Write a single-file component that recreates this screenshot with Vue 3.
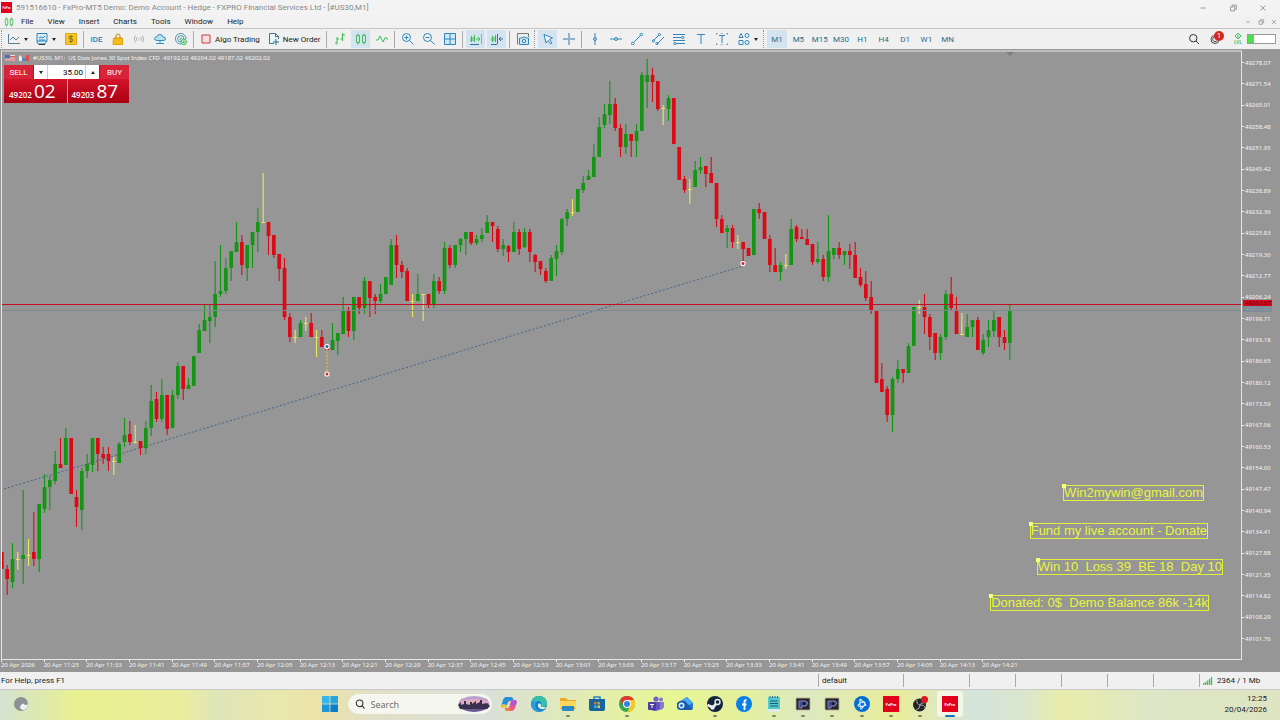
<template>
  <div class="terminal">
    <header class="titlebar">
      <span class="fx-logo">FxPro</span>
      <span class="title">591516610 - FxPro-MT5 Demo: Demo Account - Hedge - FXPRO Financial Services Ltd - [#US30,M1]</span>
      <div class="win-buttons">
        <button v-for="b in windowButtons" :key="b" type="button" :aria-label="b">
          <svg viewBox="0 0 12 12"><path v-for="(p, i) in icons[b]" :key="i" :d="p[0]" :stroke="p[1]" :fill="p[2] || 'none'" /></svg>
        </button>
      </div>
    </header>

    <nav class="menubar">
      <svg class="menu-logo" viewBox="0 0 12 12"><path v-for="(p, i) in icons.candles" :key="i" :d="p[0]" :stroke="p[1]" fill="none" /></svg>
      <button v-for="m in menus" :key="m" type="button" class="menu">{{ m }}</button>
      <div class="win-buttons small">
        <button v-for="b in windowButtons" :key="b" type="button" :aria-label="b + ' chart'">
          <svg viewBox="0 0 12 12"><path v-for="(p, i) in icons[b]" :key="i" :d="p[0]" :stroke="p[1]" fill="none" /></svg>
        </button>
      </div>
    </nav>

    <div class="toolbar">
      <span class="handle"></span>
      <template v-for="(t, n) in tools" :key="n">
        <span v-if="t === '|'" class="sep"></span>
        <span v-else-if="t === ':'" class="handle"></span>
        <button v-else type="button" class="tool" :class="{ active: t.active, wide: t.arrow, labelled: t.label }" :aria-label="t.label || t.icon">
          <b v-if="t.icon === 'ide'" class="ide">IDE</b>
          <svg v-else viewBox="0 0 12 12"><path v-for="(p, i) in icons[t.icon]" :key="i" :d="p[0]" :stroke="p[1]" :fill="p[2] || 'none'" /></svg>
          <span v-if="t.label">{{ t.label }}</span>
          <i v-if="t.arrow" class="arrow"></i>
        </button>
      </template>
      <div class="draw-tools">
        <button v-for="d in drawTools" :key="d" type="button" class="tool" :aria-label="d">
          <svg viewBox="0 0 12 12"><path v-for="(p, i) in icons[d]" :key="i" :d="p[0]" :stroke="p[1]" :fill="p[2] || 'none'" /></svg>
        </button>
      </div>
      <button type="button" class="tool wide" aria-label="shapes">
        <svg viewBox="0 0 12 12"><path v-for="(p, i) in icons.shapes" :key="i" :d="p[0]" :stroke="p[1]" fill="none" /></svg>
        <i class="arrow"></i>
      </button>
      <span class="handle"></span>
      <div class="frames">
        <button v-for="f in timeframes" :key="f" type="button" :class="{ active: f === frame }" @click="frame = f">{{ f }}</button>
      </div>
      <div class="tool-right">
        <button type="button" class="tool" aria-label="search">
          <svg viewBox="0 0 12 12"><path d="M9 5.2A3.7 3.7 0 1 1 1.6 5.2A3.7 3.7 0 1 1 9 5.2M8 8L11 11" stroke="#333" fill="none" /></svg>
        </button>
        <button type="button" class="tool alerts" aria-label="notifications">
          <svg viewBox="0 0 12 12"><path d="M10 6.5A4 4 0 1 1 2 6.5A4 4 0 1 1 10 6.5M6 4A2.3 2.3 0 1 0 8 7.5" stroke="#444" fill="none" /></svg>
          <span class="badge">1</span>
        </button>
        <span class="lvl"><svg viewBox="0 0 8 6"><path d="M4 0L7 3L4 6L1 3ZM4 2V6" stroke="#43bd62" fill="none" /></svg>LVL</span>
        <span class="battery"><i></i></span>
      </div>
    </div>

    <main class="chart">
      <div class="plot">
        <svg class="candles" viewBox="2 52 1239 607" preserveAspectRatio="none">
          <path d="M1006 52H1014L1010 56Z" fill="#788278" />
          <path d="M4 489L743 266" class="trend" />
          <g v-for="(c, i) in candles" :key="i" :class="c.kind">
            <rect :x="c.x - 0.5" :y="c.high" width="1.1" :height="c.low - c.high" />
            <rect :x="c.x - 1.8" :y="c.top" width="3.7" :height="Math.max(c.bottom - c.top, 1)" />
          </g>
          <path d="M2 310.5H1241" stroke="#7d8a94" />
          <path d="M2 304.5H1241" stroke="#c20f22" stroke-width="1.2" />
          <path d="M327 348V373" stroke="#e0b63c" stroke-width="1.4" stroke-dasharray="2 1.5" />
          <g class="marker">
            <circle cx="327" cy="346.5" r="2.6" /><circle cx="327" cy="346.5" r="1.5" class="buy" />
            <circle cx="327" cy="374" r="2.6" /><circle cx="327" cy="374" r="1.5" />
            <circle cx="743" cy="263.5" r="2.6" /><circle cx="743" cy="263.5" r="1.5" />
          </g>
        </svg>

        <div class="caption">
          <svg class="flag" viewBox="0 0 10 8"><path d="M0 1H10V7H0Z" fill="#f4dede" /><path d="M5 2.5H10M0 6H10M5 4H10" stroke="#d35a5a" /><path d="M0 1H5V4.5H0Z" fill="#4a72b0" /></svg>
          <svg class="flag" viewBox="0 0 10 8"><path d="M0 1L3 3V7H0Z" fill="#e7edf5" /><path d="M3 3L5 5L7 3V7H3Z" fill="#4a86c0" /><path d="M7 1H10V7H7Z" fill="#d85050" /></svg>
          <span>{{ caption }}</span>
        </div>

        <form class="trade" @submit.prevent>
          <button type="button" class="side">SELL</button>
          <div class="volume">
            <button type="button" aria-label="less"><i class="arrow"></i></button>
            <input v-model="volume" aria-label="Volume" />
            <button type="button" aria-label="more"><i class="arrow up"></i></button>
          </div>
          <button type="button" class="side">BUY</button>
          <button type="button" class="price">49202 <b>02</b></button>
          <button type="button" class="price">49203 <b>87</b></button>
        </form>

        <div v-for="n in notes" :key="n.name" class="note" :class="n.name">{{ n.text }}</div>
      </div>
      <div class="prices">
        <span v-for="p in prices" :key="p">{{ p }}</span>
        <em class="ask">49203.87</em>
        <em class="bid">49202.02</em>
      </div>
      <div class="times">
        <span v-for="t in times" :key="t">{{ t }}</span>
      </div>
    </main>

    <footer class="status">
      <span class="help">For Help, press F1</span>
      <span class="cell profile">default</span>
      <span class="cell w66"></span>
      <span class="cell"></span>
      <span class="cell"></span>
      <span class="cell"></span>
      <span class="cell"></span>
      <span class="cell"></span>
      <span class="cell traffic">
        <svg viewBox="0 0 10 8"><path d="M.5 8V6M2.5 8V5M4.5 8V3.5M6.5 8V2M8.5 8V0" stroke="#4cba5a" stroke-width="1.4" /></svg>
        2364 / 1 Mb
      </span>
    </footer>

    <div class="taskbar">
      <div class="weather">
        <svg viewBox="0 0 16 16"><circle cx="8" cy="8" r="7" fill="#8b9295" /><path d="M8 13a2.5 2.5 0 0 1 0-4q2-3 4 0q3-1 3 0a7 7 0 0 1-4 5Q9 14 8 13" fill="#eef1f6" /></svg>
      </div>
      <div class="dock">
        <button type="button" class="app start" aria-label="Start">
          <svg viewBox="0 0 16 16"><path d="M0 0H7.6V7.6H0Z" fill="#35b5e8" /><path d="M8.4 0H16V7.6H8.4Z" fill="#27a5e0" /><path d="M0 8.4H7.6V16H0Z" fill="#1d97d8" /><path d="M8.4 8.4H16V16H8.4Z" fill="#0c7ccb" /></svg>
        </button>
        <label class="search">
          <svg viewBox="0 0 12 12"><path d="M9.5 5.2A4 4 0 1 1 1.5 5.2A4 4 0 1 1 9.5 5.2M8.5 8L11.5 11.5" stroke="#333" stroke-width="1.3" fill="none" /></svg>
          <input type="text" placeholder="Search" aria-label="Search" />
          <svg class="skyline" viewBox="0 0 32 16"><path d="M3 3Q16-3 29 3Q34 9 29 13Q16 19 3 13Q-2 8 3 3" fill="#b9a0cf" /><path d="M2 5Q16 1 30 5V8H1Z" fill="#e0aabf" /><path d="M0 9L3 6V9L6 8V5H8V8L12 9V6H14V8L18 5V8L22 6V4H24V8L29 7L32 10L29 13H2Z" fill="#3b304d" /><path d="M4 13H28Q16 19 4 13" fill="#655b8d" /></svg>
        </label>
        <div class="apps">
          <button type="button" class="app" aria-label="Copilot">
            <svg viewBox="0 0 16 16"><path d="M5 1H10Q12 1 12.5 4L9 5Q7 5 6 9L5 12H2Q0 12 .5 9L2 4Q3 1 5 1" fill="#268fd9" /><path d="M10 4H14Q16 4 15.5 7L14 12Q13 15 11 15H6Q4 15 4 12H7Q8.5 11 9 8Z" fill="#e9568f" /><path d="M12 4H14Q16 4 15.5 7L15 9H9Z" fill="#a957db" /><path d="M2 8L6 9L5 12H2Q0 12 1 9Z" fill="#edc83b" /><path d="M4 12H9L11 15H6Q4 15 4 12" fill="#f27847" /></svg>
          </button>
          <button type="button" class="app" aria-label="Edge">
            <svg viewBox="0 0 16 16"><circle cx="8" cy="8" r="8" fill="#1578c8" /><path d="M.2 7Q1 0 8 0Q15 0 16 7Q16 11 12 11Q9 11 10 9Q11 5 7 5Q2 5 .2 7" fill="#35c1a6" /><path d="M7 5Q3 8 5 12Q7 16 13 14Q9 17 5 15Q0 13 .2 8Q2 4 7 5" fill="#2a9fe0" /><path d="M10 9Q9 11 12 11H15Q13 14 10 13Q6 12 7 8Q9 6 10 9" fill="#d9eee9" /></svg>
          </button>
          <button type="button" class="app open" aria-label="Files">
            <svg viewBox="0 0 16 16"><path d="M0 2H6L8 4H15Q16 4 16 5V13H0Z" fill="#e8a92d" /><path d="M0 5H16V12H0Z" fill="#ffd75c" /><path d="M2 10H14V14Q14 15 13 15H3Q2 15 2 14Z" fill="#2d88c9" /></svg>
          </button>
          <button type="button" class="app" aria-label="Store">
            <svg viewBox="0 0 16 16"><path d="M5 4V1H11V4" stroke="#2586bb" stroke-width="1.5" fill="none" /><path d="M0 3H16V13Q16 15 14 15H2Q0 15 0 13Z" fill="#17659d" /><path d="M5 6H7.5V8.5H5Z" fill="#ef6448" /><path d="M8.5 6H11V8.5H8.5Z" fill="#7cc342" /><path d="M5 9.5H7.5V12H5Z" fill="#42aeed" /><path d="M8.5 9.5H11V12H8.5Z" fill="#fac835" /></svg>
          </button>
          <button type="button" class="app open" aria-label="Chrome">
            <svg viewBox="0 0 16 16"><circle cx="8" cy="8" r="8" fill="#32a853" /><path d="M1 4A8 8 0 0 1 15 4L8 4Q5 5 4.5 9Z" fill="#df3c30" /><path d="M8 4H15A8 8 0 0 1 8 16L11.5 10Z" fill="#f9c81c" /><circle cx="8" cy="8" r="4" fill="#fff" /><circle cx="8" cy="8" r="3" fill="#367fe0" /></svg>
          </button>
          <button type="button" class="app" aria-label="Teams">
            <svg viewBox="0 0 16 16"><circle cx="8" cy="3" r="2.6" fill="#6c64cc" /><circle cx="13" cy="3.5" r="2" fill="#8172d0" /><path d="M10 6H16V11Q15 14 11 14Z" fill="#8c78d8" /><path d="M3 6H12V12Q11 15 7 15Q3 15 2 12Z" fill="#6454bd" /><rect y="6" width="8" height="8" rx="1" fill="#4b3ba3" /><path d="M2 8.5H6M4 8.5V12" stroke="#fff" /></svg>
          </button>
          <button type="button" class="app" aria-label="Mail">
            <svg viewBox="0 0 16 16"><path d="M0 7L10 1L16 7V12Q16 14 14 14H5Z" fill="#2478d0" /><path d="M10 1L16 7L9 10L5 4Z" fill="#4ba9ef" /><path d="M0 7L3 5H8L15 13Q15 14 14 14H4Q0 14 0 11Z" fill="#1758ad" /><circle cx="4.5" cy="9.5" r="3" fill="#d8edfb" /><circle cx="4.5" cy="9.5" r="1.5" fill="#256cb9" /></svg>
          </button>
          <button type="button" class="app open" aria-label="Steam">
            <svg viewBox="0 0 16 16"><circle cx="8" cy="8" r="8" fill="#14243c" /><path d="M.5 9L6 11.5L8 9L11 7" stroke="#e8edf1" stroke-width="2.5" fill="none" /><circle cx="10.5" cy="6" r="3.2" fill="#e8edf1" /><circle cx="10.5" cy="6" r="1.8" fill="#14243c" /><circle cx="5.5" cy="11.5" r="2.2" fill="#e8edf1" /></svg>
          </button>
          <button type="button" class="app" aria-label="Facebook">
            <svg viewBox="0 0 16 16"><circle cx="8" cy="8" r="8" fill="#0b7fe8" /><path d="M8.5 14V5.5Q8.500 4 10.5 4M6 8.5H10.5" stroke="#fff" stroke-width="1.8" fill="none" /></svg>
          </button>
          <button type="button" class="app open" aria-label="Notepad">
            <svg viewBox="0 0 16 16"><path d="M2 1H14V15H2Z" fill="#55c8cf" /><path d="M2 13H14V16H2Z" fill="#dceae8" /><path d="M4 5H12M4 7.5H12M4 10H12" stroke="#17616f" /><path d="M4 0V2M6.5 0V2M9 0V2M11.5 0V2" stroke="#296b7c" /></svg>
          </button>
          <button v-for="n in 2" :key="n" type="button" class="app open" :aria-label="'Processor ' + n">
            <svg viewBox="0 0 16 16"><path d="M1.5 2.5H14.5V13.5H1.5Z" fill="#28222b" stroke="#4a3d42" stroke-width="1.5" stroke-dasharray="1 1" /><path d="M4 12V5H11L13 7L11 10H7V12Z" fill="#424c93" stroke="#7c88b8" /><circle cx="9" cy="7.5" r="1.5" fill="#14141f" /></svg>
          </button>
          <button type="button" class="app open" aria-label="Battle.net">
            <svg viewBox="0 0 16 16"><circle cx="8" cy="8" r="8" fill="#086fd2" /><path d="M6 3Q9 5 12 9Q9 11 4 10M6 3Q5 8 7 13Q11 10 11 6M4 10Q5 6 11 6" stroke="#d6efff" stroke-width="1.1" fill="none" /></svg>
          </button>
          <button type="button" class="app open" aria-label="FxPro"><span class="fx-logo big">FxPro</span></button>
          <button type="button" class="app open" aria-label="OBS">
            <svg viewBox="0 0 16 16"><circle cx="7.500" cy="9" r="6.5" fill="#252529" /><path d="M5 4Q4 8 8 9Q13 9 13 12M8 9Q8 13 4 14M8 9Q9 6 12 7" stroke="#a9a9aa" fill="none" /><circle cx="12.5" cy="3.5" r="3.5" fill="#df1522" /></svg>
          </button>
          <button type="button" class="app open current" aria-label="FxPro terminal"><span class="fx-logo big">FxPro</span></button>
        </div>
      </div>
      <div class="clock">12:25<br />20/04/2026</div>
    </div>
  </div>
</template>

<script setup>
import { ref } from 'vue'

const frame = ref('M1')
const volume = ref('35.00')
const caption = '#US30, M1:  US Dow Jones 30 Spot Index CFD  49192.02 49204.02 49187.02 49202.02'

const menus = ['File', 'View', 'Insert', 'Charts', 'Tools', 'Window', 'Help']
const windowButtons = ['minimize', 'restore', 'close']
const timeframes = ['M1', 'M5', 'M15', 'M30', 'H1', 'H4', 'D1', 'W1', 'MN']
const drawTools = ['vline', 'hline', 'trendline', 'channel', 'fibo', 'text', 'label']

const notes = [
  { name: 'mail', text: 'Win2mywin@gmail.com' },
  { name: 'fund', text: 'Fund my live account - Donate' },
  { name: 'score', text: 'Win 10  Loss 39  BE 18  Day 10' },
  { name: 'donated', text: 'Donated: 0$  Demo Balance 86k -14k' }
]

const tools = [
  { icon: 'chart', arrow: true },
  { icon: 'indicator', arrow: true },
  { icon: 'dollar' },
  '|',
  { icon: 'ide' },
  { icon: 'bag' },
  { icon: 'signal' },
  { icon: 'cloud' },
  { icon: 'vps' },
  '|',
  { icon: 'stop', label: 'Algo Trading' },
  { icon: 'order', label: 'New Order' },
  '|',
  { icon: 'bars' },
  { icon: 'candles', active: true },
  { icon: 'line' },
  '|',
  { icon: 'zoomIn' },
  { icon: 'zoomOut' },
  { icon: 'grid' },
  '|',
  { icon: 'scroll', active: true },
  { icon: 'shift', active: true },
  '|',
  { icon: 'camera' },
  ':',
  { icon: 'cursor', active: true },
  { icon: 'cross' },
  '|'
]

const blue = '#2f86b8'
const green = '#3dbb55'
const grey = '#8a8a8a'

// every icon is a list of [path, stroke, fill] on a 12x12 grid
const icons = {
  minimize: [['M3 6H9', grey]],
  restore: [['M3 4.5H8V9.5H3ZM5 4V2.5H10V7.5H8.5', grey]],
  close: [['M3 3L9 9M9 3L3 9', grey]],
  chart: [['M.5 1V10.5H12M2 7L5 4L8 7L11 4', '#547f97']],
  indicator: [['M1 .5H11V8L9 11H2L1 9ZM1 8H11', blue, '#d9edf5'], ['M3 5L5 4L7 5L9 3M3 7H9', blue], ['M3 11.5H9', '#333']],
  dollar: [['M.5 .5H11.5V11.5H.5Z', '#dfa916', '#f4c528'], ['M8 3.5H5Q4 3.5 4 4.7T5 6H7Q8 6 8 7.2T7 8.5H4M6 2V10', '#8b6c18']],
  bag: [['M1.5 5H10.5V11.5H1Z', '#dfa30f', '#f5bd1b'], ['M4 6V3Q4 1 6 1Q8 1 8 3V6', '#b88711']],
  signal: [['M6 5.5V6.5M4.2 4Q3 6 4.2 8M7.8 4Q9 6 7.8 8M2.5 2.5Q0 6 2.5 9.5M9.5 2.5Q12 6 9.5 9.5', '#b3b3b3']],
  cloud: [['M3 7.5Q.5 7.5 .5 5.5Q.5 4 2.5 4Q3 1.5 6 1.5Q8.5 1.5 9 4Q11.5 4 11.5 6Q11.5 7.5 9 7.5ZM6 8V10M2 10.5H10', '#2a91c0', '#b8e2f2']],
  vps: [['M11 6A5.3 5.3 0 1 0 6 11M9 6A3.2 3.2 0 1 0 6 9M7 6A1 1 0 1 0 6 7', '#4795af'], ['M11.5 9A2.7 2.7 0 1 1 6.1 9A2.7 2.7 0 1 1 11.5 9', green, '#dff5e3'], ['M8.8 7.5V10.5M7.3 9H10.3', green]],
  stop: [['M2 2H10V10H2Z', '#cb3a48', '#f9dfe1']],
  order: [['M6 10.5H1.5V.5H7.5L10.5 3.5V6M7.5 .5V3.5H10.5', '#4b7186', '#eaf5f7'], ['M8 6V12M5 9H11', '#24748d']],
  bars: [['M3 4V11.5M1 10H3M3 6H5M8.5 0V8M6.5 6H8.5M8.5 2H11', green]],
  candles: [['M1.5 2.5H4.5V9.5H1.5ZM3 .5V2.5M3 9.5V11.5M7.5 2.5H10.5V9.5H7.5ZM9 .5V2.5M9 9.5V11.5', green]],
  line: [['M0 7H2L4 3L7 9L9.5 4L11 6H12', green]],
  zoomIn: [['M8.5 4.5A4 4 0 1 1 .5 4.5A4 4 0 1 1 8.5 4.5M7.5 7.5L11.5 11.5M4.5 2.5V6.5M2.5 4.5H6.5', blue]],
  zoomOut: [['M8.5 4.5A4 4 0 1 1 .5 4.5A4 4 0 1 1 8.5 4.5M7.5 7.5L11.5 11.5M2.5 4.5H6.5', blue]],
  grid: [['M.5 .5H11.5V11.5H.5ZM6 .5V11.5M.5 6H11.5', blue, '#cfeaf5']],
  scroll: [['M0 5V8M1.5 3V9M3 4V8M4.500 2V9', green], ['M6 6H10M8 4L10 6L8 8', green], ['M12 1V11M0 11.5H9', '#37739a']],
  shift: [['M0 5V8M1.5 3V9M3 4V8M4.500 2V9', green], ['M12 6H8M10 4L8 6L10 8M6.5 1V11M0 11.5H6', '#37739a']],
  camera: [['M.5 11.5V.5H11.5V4', '#777'], ['M2.5 5H5L6 4H8L9 5H11.5V11.5H2.5Z', blue, '#cfe6f4'], ['M8.7 8A1.7 1.7 0 1 1 5.3 8A1.7 1.7 0 1 1 8.7 8', blue]],
  cursor: [['M2 1.5L10.5 5L7.5 6.5L10 10L8.5 11L6 7.5L4 10Z', blue, '#edf7fc']],
  cross: [['M6 0V5M6 7V12M0 6H5M7 6H12M5 6H7', '#2879a8']],
  vline: [['M6 0V12', blue], ['M7.5 6A1.5 1.5 0 1 1 4.5 6A1.5 1.5 0 1 1 7.5 6', blue, '#bde0ec']],
  hline: [['M0 6H12', blue], ['M7.5 6A1.5 1.5 0 1 1 4.5 6A1.5 1.5 0 1 1 7.5 6', blue, '#bde0ec']],
  trendline: [['M2.5 9.5L9.5 2.5M3 10.5A1.3 1.3 0 1 1 .4 10.5A1.3 1.3 0 1 1 3 10.5M11.6 1.5A1.3 1.3 0 1 1 9 1.5A1.3 1.3 0 1 1 11.6 1.5', blue]],
  channel: [['M2 7L7 2M5 11L12 4M2.5 8A1.1 1.1 0 1 1 .3 8A1.1 1.1 0 1 1 2.5 8M8.5 1.5A1.1 1.1 0 1 1 6.3 1.5A1.1 1.1 0 1 1 8.5 1.5M6 10.5A1.1 1.1 0 1 1 3.8 10.5A1.1 1.1 0 1 1 6 10.5', blue]],
  fibo: [['M0 1.5H12M0 4.5H8M0 7.5H12M3 10.5H12M11 4.5A1.2 1.2 0 1 1 8.6 4.5A1.2 1.2 0 1 1 11 4.5M3 10.5A1.2 1.2 0 1 1 .6 10.5A1.2 1.2 0 1 1 3 10.5', blue]],
  text: [['M2 1.5H10M6 1.5V11', blue]],
  label: [['M3 2.5H9M6 2.5V10', blue], ['M0 2V0H2M10 0H12V2M0 10V12H2M10 12H12V10M4.5 0H7M4.5 12H7', '#777']],
  shapes: [['M3 .5L5 4.5H1ZM1 7.5H5V11.5H1ZM11 2.5A2 2 0 1 1 7 2.5A2 2 0 1 1 11 2.5M11 9.5A2 2 0 1 1 7 9.5A2 2 0 1 1 11 9.5', blue]]
}

// kind, high, body top, body bottom, low
const raw = `r552,552,569,569 r565,569,579,595 g543,559,582,588 y552,559,559,570 g490,555,559,584 y539,555,555,566
r512,552,559,566 g504,504,559,572 g474,487,509,513 g476,480,487,510 g451,464,481,484 r438,464,468,468
g428,438,465,465 r438,438,494,494 r490,497,507,527 g468,471,510,530 g454,464,471,478 g438,438,465,472
r438,438,454,471 r447,454,458,464 r447,454,461,471 y457,461,461,475 g442,444,463,463 g418,435,442,447
r421,434,442,445 y425,442,442,442 r441,441,448,455 g421,428,448,454 g385,401,428,436 r392,399,419,422
g379,395,419,422 r395,395,429,435 g390,395,428,428 g362,366,395,399 r366,366,389,400 g378,385,389,389
g356,356,386,386 g324,330,353,353 g304,320,331,331 g304,317,321,343 g261,294,317,327 g245,291,294,297
g258,268,291,294 g251,251,268,281 g222,242,252,252 r235,242,265,275 g245,245,268,281 g232,232,245,268
g208,222,232,252 y173,222,222,222 r222,222,236,255 r235,235,255,258 r254,254,269,281 r258,268,317,320
r313,317,337,342 y330,337,337,343 g320,323,337,337 y317,323,323,331 r313,323,337,337 y330,337,337,357
r330,337,347,347 r346,346,350,350 g323,340,350,350 g333,333,341,355 g297,310,334,334 r307,310,331,337
g297,297,331,340 r297,297,308,314 g277,281,308,314 r281,281,298,317 r294,297,301,314 g284,294,301,303
g277,277,294,294 g239,245,285,285 r235,245,265,278 r261,265,272,278 r268,271,301,301 y294,301,301,317
g274,294,301,301 y294,294,294,321 r294,294,305,308 g274,281,304,308 r277,281,291,294 g242,248,291,294
r245,248,265,268 g245,245,265,268 g238,239,245,252 g232,232,239,255 r232,232,243,245 g235,239,243,245
g228,235,239,242 g215,222,233,233 r222,222,226,242 r226,229,249,252 g239,245,249,256 r245,246,252,262
g222,232,252,252 r229,232,249,255 g228,232,247,248 r229,232,252,262 r254,255,262,272 r261,261,269,275
r268,271,281,283 g255,258,281,281 g245,251,259,276 g218,219,252,255 g209,212,219,226 y199,212,212,216
g189,189,212,212 g176,183,190,193 g170,176,180,180 g144,157,177,177 g117,127,157,157 g104,114,125,128
g81,104,115,124 r98,104,128,131 r124,128,147,157 g124,134,147,154 r134,134,141,157 g124,131,141,157
g72,75,131,131 g59,75,82,108 r68,75,82,102 r81,81,109,111 y105,108,108,125 g95,98,109,121
r98,98,144,144 r147,147,180,180 r176,179,190,193 y179,189,189,204 g161,170,187,187 g157,167,170,174
r166,166,174,187 r157,173,183,183 r183,183,219,227 r215,219,233,233 g225,228,232,248 r225,228,242,248
y235,242,242,249 r242,242,249,263 r248,248,256,256 g209,209,255,255 r203,209,213,219 r212,212,239,239
r235,239,265,272 r248,265,272,272 g262,265,272,281 y254,265,265,269 g219,229,265,265 r225,227,239,242
r229,237,239,239 r229,239,245,245 r244,244,262,265 g242,259,262,264 r255,259,277,281 g215,251,277,282
g248,248,255,259 r242,248,255,259 g251,251,255,265 r244,251,255,269 r242,255,278,278 r268,277,285,287
r271,284,298,301 r281,297,311,314 r310,310,383,383 r363,379,392,392 r386,389,415,422 g377,379,415,432
g360,369,379,383 r369,369,373,383 g343,346,373,373 g307,307,346,346 y300,307,307,314 r294,307,317,334
r314,317,337,350 r333,333,353,360 g334,337,353,360 g290,294,337,340 r277,294,308,311 r297,310,334,334
y313,334,334,334 g314,327,337,337 g320,320,327,337 r317,320,350,350 g334,340,353,355 g320,330,337,347
g310,320,331,337 r317,317,337,347 r330,337,343,350 g305,310,343,360`

const kinds = { r: 'down', g: 'up', y: 'doji' }
const candles = raw.split(/\s+/).map((s, i) => {
  const [high, top, bottom, low] = s.slice(1).split(',').map(Number)
  return { kind: kinds[s[0]], x: 1.8 + (i * 16) / 3, high, top, bottom, low }
})

const prices = Array.from({ length: 28 }, (_, i) => (49278.07 - i * 6.53).toFixed(2))

const times = Array.from({ length: 24 }, (_, i) => {
  if (i === 0) return '20 Apr 2026'
  const m = 11 * 60 + 17 + i * 8
  return `20 Apr ${Math.floor(m / 60)}:${String(m % 60).padStart(2, '0')}`
})
</script>

<style>
body {
  margin: 0;
}
</style>

<style scoped>
.terminal {
  min-height: 100vh;
  display: flex;
  flex-direction: column;
  font-family: Roboto, "Noto Sans", sans-serif;
  font-size: 8px;
  color: #222;
  background: #f0f0f0;
}

button {
  border: 0;
  padding: 0;
  margin: 0;
  background: none;
  font: inherit;
  color: inherit;
}

svg {
  display: block;
  flex: none;
}

.titlebar {
  height: 15px;
  padding-right: 2px;
  display: flex;
  align-items: center;
  background: #f3f3f3;
  color: #888;
}

.fx-logo {
  width: 11px;
  height: 11px;
  margin: 0 4px 0 1px;
  display: flex;
  align-items: center;
  justify-content: center;
  background: #e2001a;
  color: #fff;
  font-size: 3px;
  font-weight: 700;
}

.fx-logo.big {
  width: 16px;
  height: 16px;
  margin: 0;
  font-size: 4px;
}

.win-buttons {
  margin-left: auto;
  display: flex;
}

.win-buttons button {
  width: 30px;
  display: flex;
  justify-content: center;
}

.win-buttons svg {
  width: 10px;
  height: 10px;
}

.win-buttons.small button {
  width: 13px;
}

.win-buttons.small svg {
  width: 8px;
  height: 8px;
}

.menubar {
  height: 13px;
  display: flex;
  align-items: center;
  background: #f1f1f1;
}

.menu-logo {
  width: 10px;
  height: 10px;
  margin: 0 3px 0 4px;
}

.menu {
  padding: 0 4px;
  margin-right: 6px;
}

.toolbar {
  height: 20px;
  padding-left: 1px;
  display: flex;
  align-items: center;
  gap: 2px;
  background: #f0f0f0;
  border-top: 1px solid #c6c6c6;
}

.handle {
  width: 2px;
  height: 18px;
  border-left: 1px dotted #999;
  box-sizing: border-box;
}

.sep {
  width: 1px;
  height: 17px;
  margin: 0 1px;
  background: #aaa;
}

.tool {
  width: 19px;
  height: 18px;
  display: flex;
  align-items: center;
  justify-content: center;
}

.tool svg {
  width: 12px;
  height: 12px;
}

.tool.wide {
  width: 26px;
  gap: 4px;
}

.tool.labelled {
  width: auto;
  padding: 0 3px;
  gap: 3px;
}

.active {
  background: #d3e3f0;
}

.ide {
  color: #2f7fb0;
  font-weight: 500;
}

.arrow {
  border: 2px solid transparent;
  border-top: 3px solid #222;
  border-bottom: 0;
}

.arrow.up {
  border-top: 0;
  border-bottom: 3px solid #222;
}

.draw-tools {
  width: 148px;
  display: grid;
  grid-template-columns: repeat(7, 1fr);
}

.frames {
  width: 192px;
  display: grid;
  grid-template-columns: repeat(9, 1fr);
  color: #2b6c8c;
}

.frames button {
  height: 18px;
  margin-right: 2px;
}

.tool-right {
  margin-left: auto;
  padding-right: 4px;
  display: flex;
  align-items: center;
  gap: 2px;
}

.alerts {
  position: relative;
}

.badge {
  position: absolute;
  top: 1px;
  right: 0;
  width: 10px;
  height: 10px;
  border-radius: 5px;
  background: #d5261f;
  color: #fff;
  font-size: 7px;
  line-height: 10px;
}

.lvl {
  width: 14px;
  margin-left: 5px;
  display: flex;
  flex-direction: column;
  align-items: center;
  color: #43bd62;
  font-size: 5px;
  font-weight: 500;
  line-height: 6px;
}

.lvl svg {
  width: 8px;
  height: 6px;
}

.battery {
  width: 27px;
  height: 8px;
  border: 1px solid #999;
  background: #fff;
}

.battery i {
  display: block;
  width: 6px;
  height: 8px;
  background: #4be04b;
}

.chart {
  flex: 1;
  display: grid;
  grid-template-columns: 1fr 38px;
  grid-template-rows: 1fr 12px;
  border-top: 1px solid #999;
  background: #969696;
  color: #f4f4f4;
  font-family: "Noto Sans", sans-serif;
  font-size: 6px;
}

.plot {
  position: relative;
  min-height: 300px;
  border: 1px solid #e6e6e6;
  border-top: 2px solid #bcbcbc;
  margin-left: 1px;
}

.candles {
  position: absolute;
  inset: 0;
  width: 100%;
  height: 100%;
}

.up {
  fill: #149614;
}

.down {
  fill: #dc0a14;
}

.doji {
  fill: #e9e95a;
}

.trend {
  stroke: #42668c;
  stroke-dasharray: 2 2;
}

.marker circle {
  fill: #fff;
}

.marker circle:nth-child(even) {
  fill: #cf2323;
}

.marker .buy:nth-child(even) {
  fill: #1f5fae;
}

.caption {
  position: relative;
  display: flex;
  align-items: center;
  height: 12px;
  padding-left: 3px;
  gap: 4px;
  white-space: pre;
}

.flag {
  width: 10px;
  height: 8px;
}

.trade {
  position: relative;
  width: 125px;
  margin: 1px 0 0 2px;
  display: grid;
  grid-template-columns: 29px 1fr 1fr 29px;
  grid-template-rows: 14px 24px;
  background: #c80a1e;
  color: #fff;
  font-family: "Open Sans", sans-serif;
}

.side {
  background: #d8243a;
  font-family: Roboto, sans-serif;
  font-size: 8px;
}

.volume {
  grid-column: 2 / 4;
  display: flex;
  margin: 0 1px;
  background: #fff;
}

.volume button {
  width: 13px;
  display: flex;
  align-items: center;
  justify-content: center;
}

.volume input {
  flex: 1;
  width: 0;
  border: 1px solid #ccc;
  border-width: 0 1px;
  padding: 0 2px;
  text-align: right;
  font-family: Roboto, sans-serif;
  font-size: 8px;
}

.price {
  grid-column: span 2;
  display: flex;
  align-items: baseline;
  padding-left: 5px;
  gap: 2px;
  background: linear-gradient(#d3142a, #a80014);
  font-size: 8px;
  font-weight: 600;
  line-height: 24px;
}

.price b {
  font-size: 19px;
  font-weight: 400;
}

.price + .price {
  padding-left: 4px;
  border-left: 1px solid #e9a0a8;
}

.note {
  position: absolute;
  height: 14px;
  border: 1px solid #e2f03c;
  color: #e8f53c;
  font: 13px/14px "Liberation Sans", sans-serif;
  white-space: pre;
}

.note::before {
  content: "";
  position: absolute;
  left: -2px;
  top: -2px;
  width: 4px;
  height: 4px;
  background: #f4ff7a;
}

.mail {
  right: 37px;
  bottom: 158px;
}

.fund {
  right: 33px;
  bottom: 120px;
}

.score {
  right: 18px;
  bottom: 84px;
}

.donated {
  right: 32px;
  bottom: 48px;
}

.prices {
  position: relative;
  padding: 2px 0 11px;
  display: flex;
  flex-direction: column;
}

.prices span {
  flex: 1;
  display: flex;
  align-items: center;
}

.prices span::before {
  content: "";
  width: 2px;
  height: 1px;
  margin-right: 1px;
  background: #eee;
}

.prices em {
  position: absolute;
  left: 1px;
  width: 27px;
  height: 6px;
  padding-left: 2px;
  font-style: normal;
  line-height: 6px;
}

.ask {
  top: 250px;
  background: #d70a1c;
  color: #5c0810;
}

.bid {
  top: 256px;
  background: #7d8b99;
  color: #8b9aa8;
}

.times {
  grid-column: 1 / 3;
  width: 80%;
  display: grid;
  grid-template-columns: repeat(24, 1fr);
  line-height: 10px;
  margin-left: 1px;
}

.times span {
  width: 0;
  white-space: nowrap;
}

.times span::before {
  content: "";
  display: block;
  width: 1px;
  height: 2px;
  margin-bottom: -2px;
  background: #eee;
}

.status {
  height: 17px;
  display: flex;
  align-items: center;
  border-bottom: 1px solid #c9c9c9;
}

.help {
  flex: 1;
  padding-left: 1px;
}

.cell {
  width: 46px;
  height: 13px;
  line-height: 13px;
  border-left: 1px solid #aaa;
  box-sizing: border-box;
}

.profile {
  width: 85px;
  padding-left: 3px;
}

.w66 {
  width: 66px;
}

.traffic {
  width: 81px;
  padding-left: 3px;
  display: flex;
  align-items: center;
  gap: 4px;
}

.traffic svg {
  width: 10px;
  height: 8px;
}

.taskbar {
  height: 30px;
  padding-bottom: 2px;
  box-sizing: border-box;
  display: grid;
  grid-template-columns: 1fr auto 1fr;
  align-items: center;
  background: linear-gradient(90deg, #d3e4d2 0%, #dde8b0 3%, #e8f190 6%, #ebed9c 14%, #dfe6b8 17%, #e9e7ac 22%, #ece3a8 25%, #e0dfc6 29%, #dadfd8 38%, #e8f694 52%, #e4f09c 58%, #dce9c0 63%, #e9ed98 70%, #d5e4dc 76%, #dae6ce 80%, #e8edaa 83%, #dde6c6 90%, #dfe5c2 100%);
}

.weather {
  padding-left: 13px;
}

.weather svg {
  width: 16px;
  height: 16px;
}

.dock {
  display: flex;
  align-items: center;
  gap: 3px;
}

.app {
  position: relative;
  width: 26px;
  height: 26px;
  justify-self: center;
  display: flex;
  align-items: center;
  justify-content: center;
}

.start {
  width: 29px;
}

.app svg {
  width: 16px;
  height: 16px;
}

.open::after {
  content: "";
  position: absolute;
  bottom: 0;
  left: 11px;
  width: 4px;
  height: 2px;
  border-radius: 1px;
  background: #7f8566;
}

.current {
  background: #f3f5e6;
  border-radius: 3px;
}

.current::after {
  left: 8px;
  width: 10px;
  background: #1272c4;
}

.search {
  width: 144px;
  height: 20px;
  padding: 0 2px 0 7px;
  box-sizing: border-box;
  display: flex;
  align-items: center;
  gap: 6px;
  border-radius: 10px;
  background: #f5f6ee;
}

.search svg {
  width: 10px;
  height: 10px;
}

.search .skyline {
  width: 32px;
  height: 16px;
}

.search input {
  flex: 1;
  width: 0;
  padding: 0;
  border: 0;
  background: none;
  font-family: "Open Sans", sans-serif;
  font-size: 9px;
  color: #555;
}

.search input::placeholder {
  color: #666;
}

.apps {
  width: 470px;
  display: grid;
  grid-template-columns: repeat(16, 1fr);
}

.clock {
  padding-right: 13px;
  text-align: right;
  line-height: 11px;
}
</style>
